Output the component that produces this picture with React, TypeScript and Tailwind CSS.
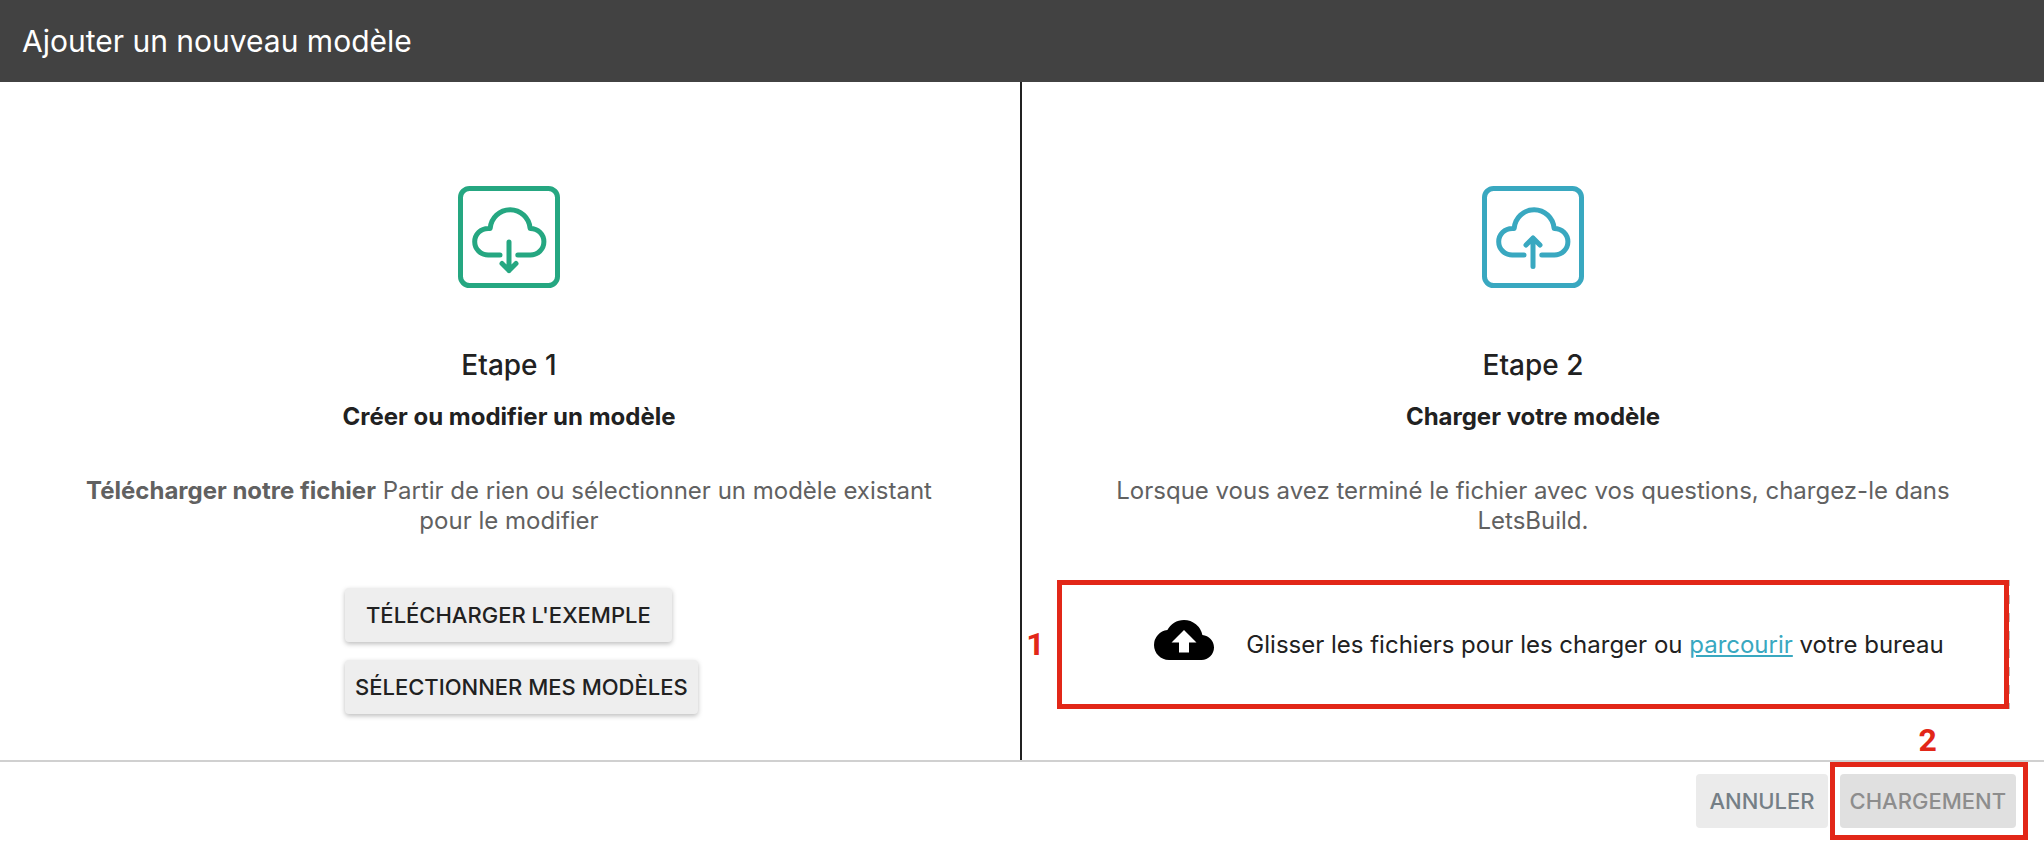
import type { ReactNode } from 'react'
import { MdCloudUpload } from 'react-icons/md'
import { clsx } from 'clsx'

interface CloudIconProps {
  direction: 'down' | 'up'
  className?: string
}

function CloudIcon({ direction, className }: CloudIconProps) {
  return (
    <svg
      viewBox="0 0 102 102"
      fill="none"
      stroke="currentColor"
      strokeWidth="5"
      strokeLinecap="round"
      strokeLinejoin="round"
      className={clsx('size-[102px]', className)}
      aria-hidden="true"
    >
      <rect x="2.5" y="2.5" width="97" height="97" rx="9" />
      <path d="M42 69H30.2a13.5 13.3 0 0 1 0-26.6H32.2a20 20 0 0 1 39.9 0H72.4a13.5 13.3 0 0 1 0 26.6H59.8" />
      {direction === 'down' ? (
        <path d="M51 56V84.5M44 77.5l7 7 7-7" />
      ) : (
        <path d="M51 80.5V52M44 59l7-7 7 7" />
      )}
    </svg>
  )
}

interface StepProps {
  icon: ReactNode
  title: string
  subtitle: string
  description: ReactNode
  children: ReactNode
  className?: string
}

function Step({ icon, title, subtitle, description, children, className }: StepProps) {
  return (
    <section className={clsx('w-1/2 pt-26 pb-[46px] flex flex-col items-center', className)}>
      {icon}
      <h2 className="mt-15 text-[28px] leading-[34px] font-medium">{title}</h2>
      <h3 className="mt-5 text-2xl leading-[30px] font-bold">{subtitle}</h3>
      <p className="mt-11 px-20 text-2xl leading-[30px] text-center text-[#616161]">{description}</p>
      {children}
    </section>
  )
}

const raisedButton =
  'h-[54px] rounded bg-[#eeeeee] text-[22px] font-medium shadow-[0_2px_5px_rgba(0,0,0,0.26)] hover:bg-[#e4e4e4]'

const marker = "font-['Roboto',sans-serif] text-[32px] leading-9 font-bold text-[#e22718]"

export default function App() {
  return (
    <div className="bg-white text-[#212121] font-['Inter',sans-serif]">
      <header className="h-[82px] px-[22px] flex items-center bg-[#424242]">
        <h1 className="text-[30px] text-white">Ajouter un nouveau modèle</h1>
      </header>

      <main className="flex border-b-2 border-[#d0d0d0]">
        {/* Etape 1 */}
        <Step
          className="pr-0.5 border-r-2 border-[#212121]"
          icon={<CloudIcon direction="down" className="text-[#25a781]" />}
          title="Etape 1"
          subtitle="Créer ou modifier un modèle"
          description={
            <>
              <strong className="font-bold">Télécharger notre fichier</strong> Partir de rien ou sélectionner un
              modèle existant pour le modifier
            </>
          }
        >
          <div className="mt-13 w-[328px] flex flex-col items-start gap-[18px]">
            <button type="button" className={clsx(raisedButton, 'px-[21px]')}>
              TÉLÉCHARGER L'EXEMPLE
            </button>
            <button type="button" className={clsx(raisedButton, 'px-2.5 whitespace-nowrap')}>
              SÉLECTIONNER MES MODÈLES
            </button>
          </div>
        </Step>

        {/* Etape 2 */}
        <Step
          icon={<CloudIcon direction="up" className="text-[#39a8c0]" />}
          title="Etape 2"
          subtitle="Charger votre modèle"
          description="Lorsque vous avez terminé le fichier avec vos questions, chargez-le dans LetsBuild."
        >
          <div className="mt-11 self-stretch pr-[34px] flex items-center">
            <span className={clsx(marker, 'w-[35px] pr-2 pb-0.5 text-center')}>1</span>
            <div className="flex-1 pr-px bg-[repeating-linear-gradient(to_bottom,#bdbdbd_0_6px,#ffffff_6px_15px,#bdbdbd_15px_18px)]">
              <div className="h-[129px] pl-8 border-5 border-[#e22718] bg-white flex items-center justify-center gap-8">
                <MdCloudUpload className="size-[60px] mb-2.5 text-black" />
                <p className="text-2xl">
                  Glisser les fichiers pour les charger ou{' '}
                  <a href="#parcourir" className="text-[#39a8c0] underline">
                    parcourir
                  </a>{' '}
                  votre bureau
                </p>
              </div>
            </div>
          </div>
        </Step>
      </main>

      <footer className="pt-3 pb-7 pr-7 flex justify-end gap-3">
        <button type="button" className="h-[54px] px-[13px] rounded bg-[#ebebeb] text-[22px] font-medium text-[#757f86]">
          ANNULER
        </button>
        <div className="relative">
          <button
            type="button"
            disabled
            className="h-[54px] px-2.5 rounded bg-[#e0e0e0] text-[22px] font-medium text-[#8d8d8d]"
          >
            CHARGEMENT
          </button>
          <div className="absolute -inset-y-3 -right-3 -left-2.5 border-5 border-[#e22718] pointer-events-none" />
          <span className={clsx(marker, 'absolute bottom-full left-1/2 -translate-x-1/2 mb-4')}>2</span>
        </div>
      </footer>
    </div>
  )
}
